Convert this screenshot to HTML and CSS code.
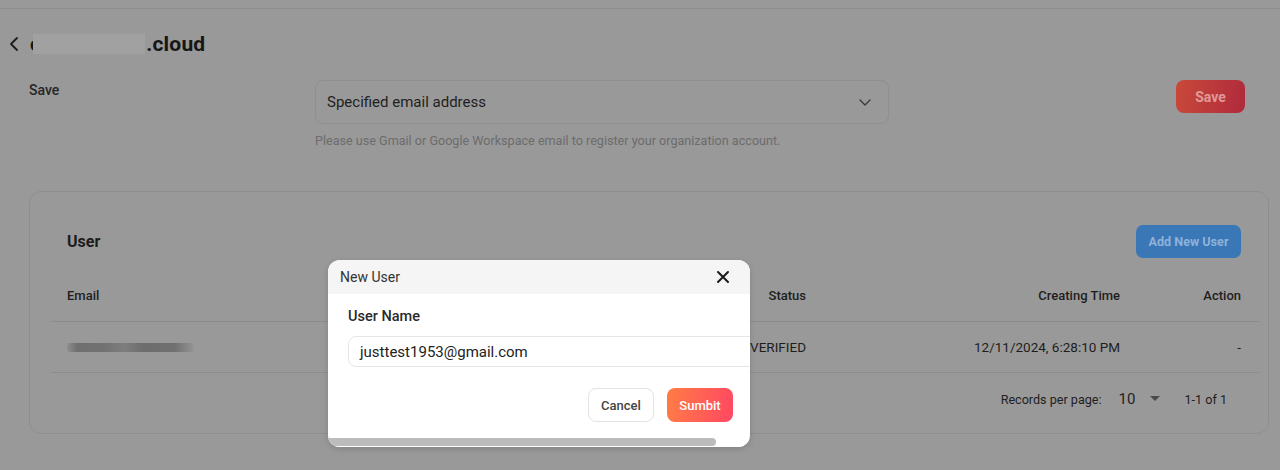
FILE: index.html
```html
<!DOCTYPE html>
<html lang="en">
<head>
<meta charset="utf-8">
<title>Organization</title>
<link rel="stylesheet" href="styles.css">
</head>
<body>
<div class="page">
  <div class="topbar"></div>
  <div class="titlebar">
    <svg class="back" width="12" height="16" viewBox="0 0 12 16"><path d="M9 2 L3 8 L9 14" fill="none" stroke="#1c1c1c" stroke-width="1.8" stroke-linecap="round" stroke-linejoin="round"/></svg>
    <h1 class="title">c<span class="redact"></span>.cloud</h1>
  </div>

  <div class="setting">
    <div class="setting-label">Save</div>
    <div class="setting-field">
      <div class="select">
        <span>Specified email address</span>
        <svg width="14" height="10" viewBox="0 0 14 10"><path d="M2 3 L7 8 L12 3" fill="none" stroke="#3a3a3a" stroke-width="1.4" stroke-linecap="round" stroke-linejoin="round"/></svg>
      </div>
      <p class="hint">Please use Gmail or Google Workspace email to register your organization account.</p>
    </div>
    <button class="btn-save">Save</button>
  </div>

  <section class="card">
    <div class="card-head">
      <h2 class="card-title">User</h2>
      <button class="btn-add">Add New User</button>
    </div>
    <div class="table">
      <div class="tr th">
        <div class="td c-email">Email</div>
        <div class="td c-status">Status</div>
        <div class="td c-time">Creating Time</div>
        <div class="td c-action">Action</div>
      </div>
      <div class="tr">
        <div class="td c-email"><span class="blur-email"></span></div>
        <div class="td c-status">VERIFIED</div>
        <div class="td c-time">12/11/2024, 6:28:10 PM</div>
        <div class="td c-action">-</div>
      </div>
      <div class="pager">
        <span class="pager-label">Records per page:</span>
        <span class="pager-size">10</span>
        <svg class="pager-caret" width="10" height="6" viewBox="0 0 10 6"><path d="M0 0 H10 L5 5 Z" fill="#4a4a4a"/></svg>
        <span class="pager-range">1-1 of 1</span>
      </div>
    </div>
  </section>
</div>

<div class="modal" role="dialog" aria-label="New User">
  <div class="modal-head">
    <span class="modal-title">New User</span>
    <svg class="close" width="14" height="14" viewBox="0 0 14 14"><path d="M2 2 L12 12 M12 2 L2 12" stroke="#1a1a1a" stroke-width="2" stroke-linecap="round"/></svg>
  </div>
  <div class="modal-scroll">
    <div class="modal-body">
      <label class="field-label">User Name</label>
      <div class="input">justtest1953@gmail.com</div>
    </div>
    <div class="modal-foot">
      <button class="btn-cancel">Cancel</button>
      <button class="btn-submit">Sumbit</button>
    </div>
  </div>
  <div class="scrollbar"><div class="scroll-thumb"></div></div>
</div>
</body>
</html>
```
FILE: styles.css
```css
* { box-sizing: border-box; }
html, body { margin: 0; padding: 0; }
body {
  width: 1280px;
  height: 470px;
  overflow: hidden;
  background: #999999;
  font-family: Roboto, "Liberation Sans", Arial, sans-serif;
  color: #1d1d1d;
  position: relative;
}
.topbar {
  height: 9px;
  border-bottom: 1px solid #8d8d8d;
}
.titlebar {
  display: flex;
  align-items: center;
  height: 50px;
  padding: 20px 0 0 8px;
}
.back { margin-right: 10px; }
.title {
  margin: 0;
  font-size: 21px;
  font-weight: 700;
  color: #161616;
  display: flex;
  align-items: center;
  letter-spacing: 0.2px;
}
.redact {
  display: inline-block;
  width: 112px;
  height: 20px;
  background: #a1a1a1;
  margin-left: -8px;
  margin-right: 1px;
}
.setting {
  display: flex;
  align-items: flex-start;
  padding: 21px 35px 0 29px;
}
.setting-label {
  width: 286px;
  font-size: 14px;
  font-weight: 500;
  color: #262626;
  padding-top: 2px;
}
.setting-field { width: 574px; }
.select {
  height: 44px;
  border: 1px solid #8f8f8f;
  border-radius: 8px;
  display: flex;
  align-items: center;
  justify-content: space-between;
  padding: 0 16px 0 11px;
  font-size: 15px;
  color: #1f1f1f;
}
.hint {
  margin: 9px 0 0;
  font-size: 12.6px;
  color: #6c6c6c;
}
.btn-save {
  margin-left: auto;
  width: 69px;
  height: 33px;
  border: none;
  border-radius: 8px;
  background: linear-gradient(100deg, #c9493a, #b02a3c);
  color: rgba(255, 235, 235, 0.55);
  font-family: inherit;
  font-size: 14px;
  font-weight: 700;
}
.card {
  margin: 43px 11px 0 29px;
  height: 243px;
  border: 1px solid #8e8e8e;
  border-radius: 12px;
  padding: 33px 9px 0 21px;
}
.card-head {
  display: flex;
  align-items: center;
  justify-content: space-between;
  height: 33px;
  padding: 0 18px 0 16px;
}
.card-title {
  margin: 0;
  font-size: 16px;
  font-weight: 700;
  color: #1c1c1c;
}
.btn-add {
  width: 105px;
  height: 33px;
  border: none;
  border-radius: 7px;
  background: #3a77b6;
  color: rgba(200, 220, 240, 0.6);
  font-family: inherit;
  font-size: 12.6px;
  font-weight: 700;
}
.table { margin-top: 12px; }
.tr {
  display: grid;
  grid-template-columns: 1fr 180px 314px 139px;
  height: 51px;
  align-items: center;
  border-bottom: 1px solid #8c8c8c;
  font-size: 13px;
  color: #1e1e1e;
}
.tr.th { height: 52px; font-weight: 500; }
.td { white-space: nowrap; }
.c-email { padding-left: 16px; }
.c-status, .c-time { text-align: right; }
.c-action { text-align: right; padding-right: 18px; }
.tr:not(.th) .td { font-size: 13.5px; }
.blur-email {
  display: inline-block;
  width: 127px;
  height: 9px;
  margin-top: 2px;
  background: linear-gradient(90deg, #8f8f8f 0%, #6f6f6f 8%, #727272 30%, #7e7e7e 45%, #6d6d6d 60%, #707070 85%, #959595 100%);
  border-radius: 3px;
  filter: blur(0.6px);
}
.pager {
  display: flex;
  align-items: center;
  justify-content: flex-end;
  height: 52px;
  padding-right: 32px;
  font-size: 12.6px;
  color: #1f1f1f;
}
.pager-size { font-size: 15px; margin-left: 17px; }
.pager-caret { margin-left: 15px; }
.pager-range { margin-left: 24px; }

.modal {
  position: absolute;
  left: 328px;
  top: 260px;
  width: 422px;
  height: 187px;
  background: #ffffff;
  border-radius: 12px;
  overflow: hidden;
  box-shadow: 0 2px 6px rgba(0, 0, 0, 0.15);
}
.modal-head {
  height: 34px;
  background: #f5f5f5;
  display: flex;
  align-items: center;
  justify-content: space-between;
  padding: 0 20px 0 12px;
}
.modal-title {
  font-size: 14px;
  color: #333333;
}
.modal-scroll {
  height: 144px;
  overflow: hidden;
}
.modal-body {
  padding: 13px 20px 0 20px;
  width: 460px;
}
.field-label {
  display: block;
  font-size: 14.5px;
  font-weight: 500;
  color: #2a2a2a;
  line-height: 20px;
}
.input {
  margin-top: 9px;
  width: 420px;
  height: 31px;
  border: 1px solid #e6e6e6;
  border-radius: 8px;
  padding: 0 11px;
  display: flex;
  align-items: center;
  font-size: 15px;
  color: #222222;
}
.modal-foot {
  display: flex;
  justify-content: flex-end;
  gap: 13px;
  padding: 21px 17px 0 0;
  width: 422px;
}
.btn-cancel, .btn-submit {
  height: 34px;
  border-radius: 8px;
  font-family: inherit;
  font-size: 13px;
  font-weight: 500;
}
.btn-cancel {
  width: 66px;
  background: #ffffff;
  border: 1px solid #e3e3e3;
  color: #444444;
}
.btn-submit {
  width: 66px;
  border: none;
  background: linear-gradient(100deg, #ff7d45, #ff4762);
  color: #ffffff;
}
.scrollbar {
  height: 9px;
  background: #ffffff;
}
.scroll-thumb {
  width: 388px;
  height: 8px;
  background: #bcbcbc;
  border-radius: 0 5px 5px 0;
}
```
